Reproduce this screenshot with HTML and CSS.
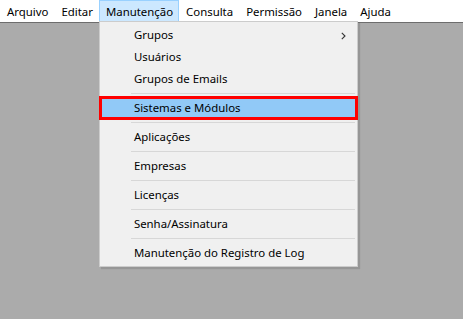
FILE: index.html
```html
<!DOCTYPE html>
<html lang="pt">
<head>
<meta charset="utf-8">
<link rel="stylesheet" href="styles.css">
</head>
<body>
<div class="app">
  <nav class="menubar">
    <span class="top">Arquivo</span>
    <span class="top">Editar</span>
    <span class="top open">Manutenção
      <div class="dropdown">
        <div class="item">Grupos<svg class="chev" width="5" height="8" viewBox="0 0 5 8"><path d="M0.8 0.8 L4 4 L0.8 7.2" fill="none" stroke="#333" stroke-width="1.1"/></svg></div>
        <div class="item">Usuários</div>
        <div class="item">Grupos de Emails</div>
        <div class="sep"></div>
        <div class="item selected">Sistemas e Módulos</div>
        <div class="sep"></div>
        <div class="item">Aplicações</div>
        <div class="sep"></div>
        <div class="item">Empresas</div>
        <div class="sep"></div>
        <div class="item">Licenças</div>
        <div class="sep"></div>
        <div class="item">Senha/Assinatura</div>
        <div class="sep"></div>
        <div class="item">Manutenção do Registro de Log</div>
      </div>
    </span>
    <span class="top">Consulta</span>
    <span class="top">Permissão</span>
    <span class="top">Janela</span>
    <span class="top">Ajuda</span>
  </nav>
  <main class="workspace"></main>
</div>
</body>
</html>
```
FILE: styles.css
```css
* { box-sizing: border-box; }
html, body { margin: 0; padding: 0; }
body {
  width: 463px;
  height: 319px;
  overflow: hidden;
  font-family: "Noto Sans", "Open Sans", sans-serif;
  font-size: 11.4px;
  color: #000;
}
.app {
  display: flex;
  flex-direction: column;
  height: 319px;
}
.menubar {
  display: flex;
  height: 22px;
  background: #fff;
  align-items: stretch;
}
.top {
  position: relative;
  display: flex;
  align-items: center;
  padding: 0 5px 0 6px;
  border: 1px solid transparent;
  border-bottom: none;
  white-space: nowrap;
  line-height: 1;
}
.top.open {
  background: #cce8ff;
  border-color: #99d1ff;
}
.workspace {
  flex: 1;
  background: #ababab;
  border-top: 1px solid #6d6d6d;
}
.dropdown {
  position: absolute;
  left: -1px;
  top: 20px;
  width: 259px;
  background: #f0f0f0;
  border: 1px solid #cccccc;
  padding: 2px 0;
  box-shadow: 2px 2px 1px rgba(0,0,0,0.12);
  z-index: 2;
}
.item {
  position: relative;
  height: 22px;
  display: flex;
  align-items: center;
  padding-left: 34px;
}
.item .chev {
  position: absolute;
  right: 11px;
  top: 8px;
}
.item.selected {
  background: #91c9f7;
  outline: 3px solid #ff0000;
  outline-offset: -2px;
}
.sep {
  height: 7px;
  display: flex;
  align-items: center;
  padding-left: 31px;
  padding-right: 2px;
}
.sep::before {
  content: "";
  display: block;
  flex: 1;
  height: 1px;
  background: #d7d7d7;
}
```
